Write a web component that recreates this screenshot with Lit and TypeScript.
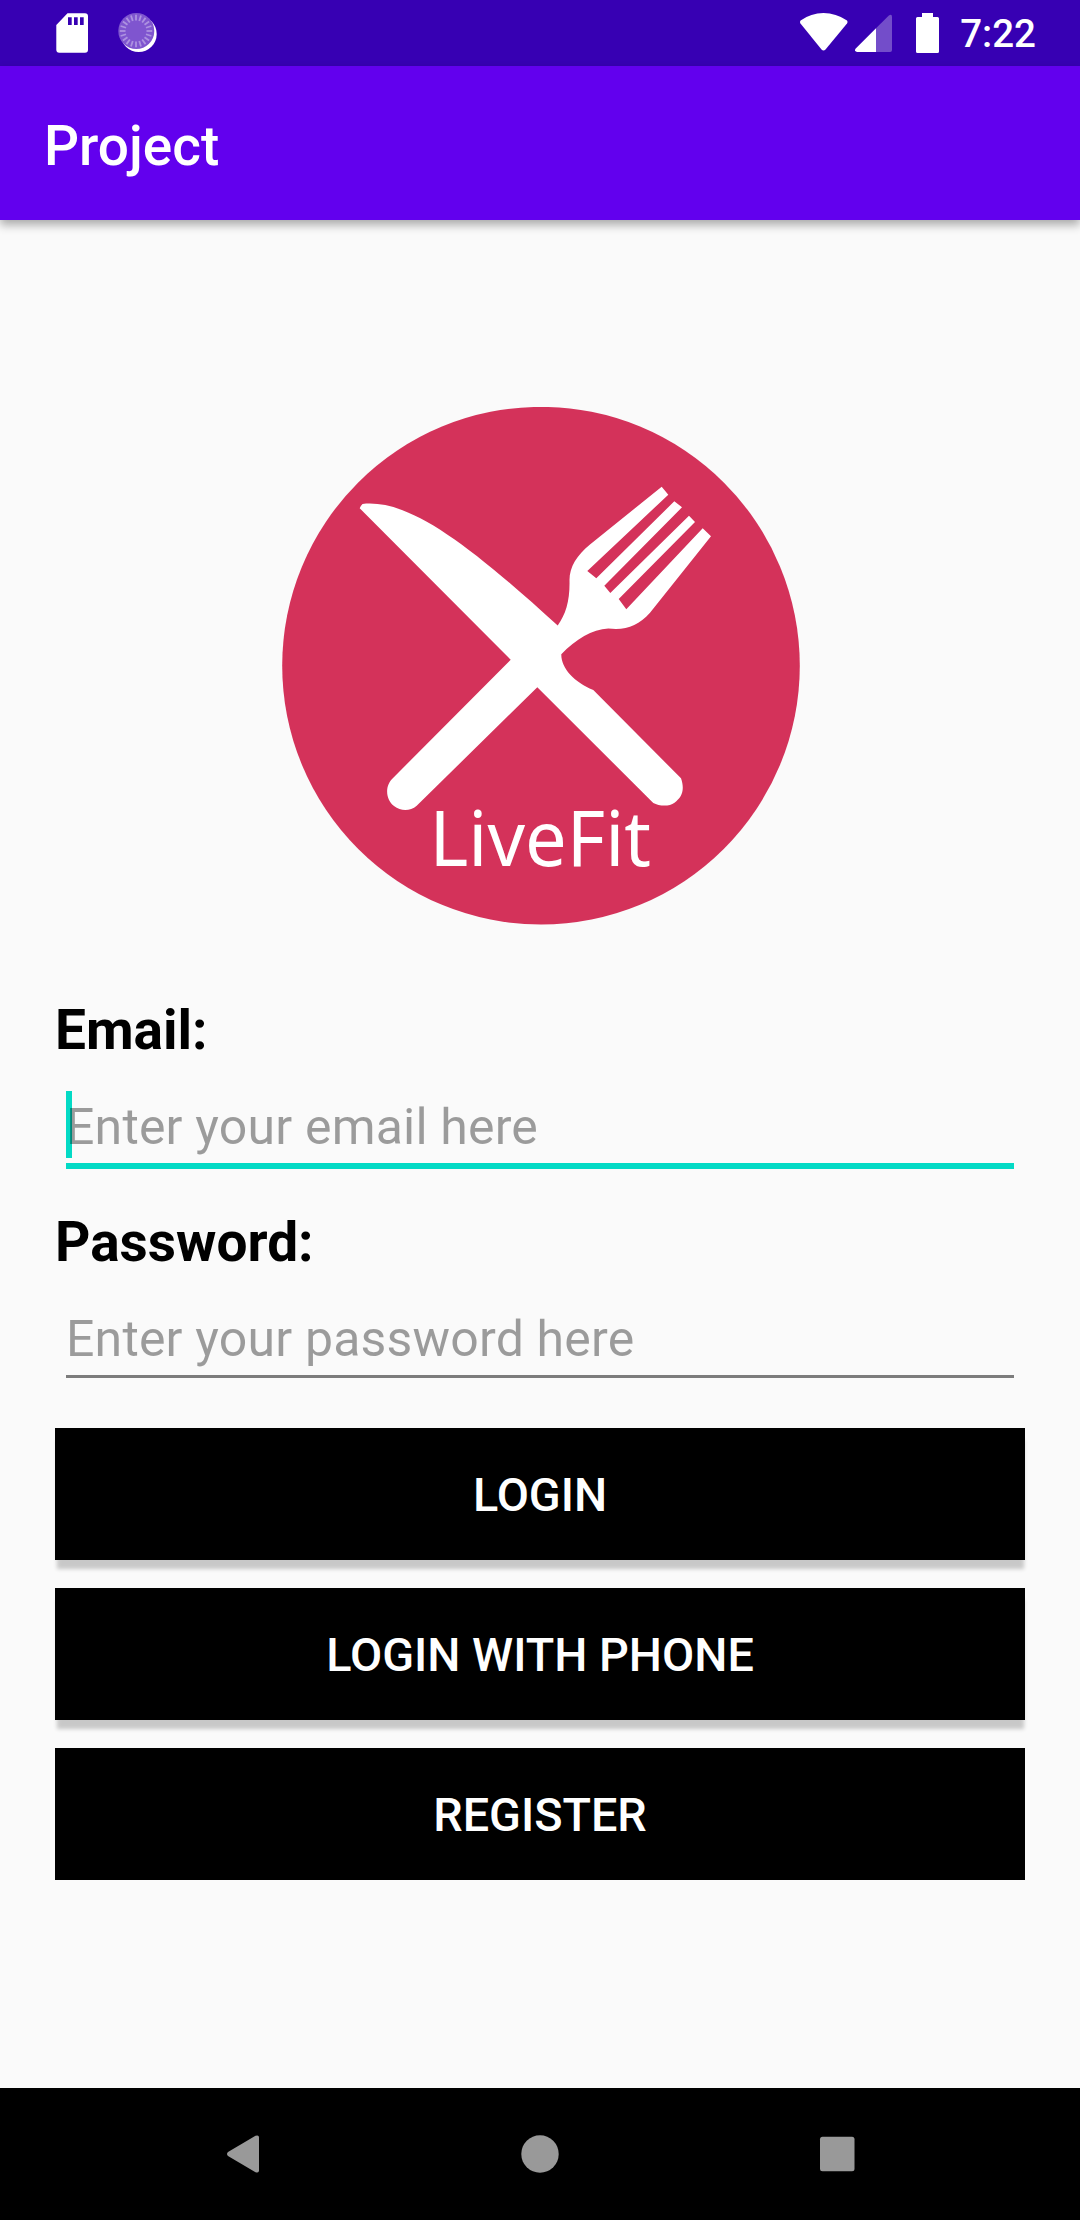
import { LitElement, html, css, svg } from "lit";
import { customElement, property } from "lit/decorators.js";

const TICKS = Array.from({ length: 20 }, (_, i) => i * 18);

@customElement("status-bar")
class StatusBar extends LitElement {
  static styles = css`
    :host {
      display: flex;
      align-items: center;
      justify-content: space-between;
      height: 66px;
      background: #3700b3;
      color: #fff;
    }
    svg { display: block; }
    .side { display: flex; align-items: center; }
    .left { padding-left: 56px; gap: 29px; }
    .right { padding-right: 44px; }
    .signal { margin-left: 7px; }
    .battery { margin-left: 24px; }
    .clock {
      margin-left: 20px;
      padding-top: 2px;
      font: 500 38.500px/64px Roboto, sans-serif;
    }
  `;
  render() {
    return html`
      <div class="side left">
        <svg width="33" height="40" viewBox="56 13 33 40">
          <path fill="#fff" fill-rule="evenodd" d="M67.5 13.3H85a3 3 0 0 1 3 3V49.700a3 3 0 0 1-3 3H59.300a3 3 0 0 1-3-3V25ZM68 17.300V25h3.700V17.300ZM74 17.300V25h3.700V17.300ZM80 17.300V25h3.700V17.300Z" />
        </svg>
        <svg width="40" height="40" viewBox="118 13 40 40">
          <circle cx="138.700" cy="34" r="18" fill="#fff" />
          <circle cx="136.300" cy="31" r="18" fill="#7f55cf" />
          ${TICKS.map(
            (a) => svg`<path d="M136 14.800v5.700" stroke="#ad92e0" stroke-width="1.800" transform="rotate(${a} 136 31)" />`
          )}
        </svg>
      </div>
      <div class="side right">
        <svg width="48" height="40" viewBox="800 13 48 40">
          <path fill="#fff" d="M800.600 20.500Q811 13 823.500 13T847 20.500Q848 22 847 23.500L825.500 49.500Q823.500 51.500 821.500 49.500L800.500 23.500Q799.500 22 800.600 20.500Z" />
        </svg>
        <svg class="signal" width="37" height="40" viewBox="855 13 37 40">
          <path fill="#fff" fill-opacity=".3" d="M876 28.300L888.600 15.700Q892 13.500 892 17V50q0 2-2 2H876Z" />
          <path fill="#fff" d="M876 28.300V52H857q-3-.5-1.500-3.300Z" />
        </svg>
        <svg class="battery" width="24" height="40" viewBox="916 13 24 40">
          <path fill="#fff" d="M922 13h11v4h4.500q1.500 0 1.500 1.500V51.500q0 1.500-1.500 1.500H917.500q-1.500 0-1.500-1.500V18.500q0-1.500 1.500-1.500H922Z" />
        </svg>
        <span class="clock">7:22</span>
      </div>
    `;
  }
}

@customElement("live-fit-logo")
class LiveFitLogo extends LitElement {
  static styles = css`
    :host { display: block; }
    svg { display: block; }
    .name { font-family: "Noto Sans", "Open Sans", sans-serif; font-size: 77.500px; fill: #fff; }
  `;
  render() {
    return html`
      <svg width="518" height="518" viewBox="282 407 518 518">
        <circle cx="541" cy="665.700" r="258.800" fill="#d4325a" />
        <path fill="#fff" d="M359.700 508.300Q360.500 506 362.500 504C409 499 467 543 557.700 625.500
          C566 614 570 600 569.500 580C569.500 567 577 555 590 544.500
          L661.700 486.700L668.300 494.700L587.300 571L596.300 578.300L674.300 501.300L682 507.300
          L604.300 585.700L610.300 593L689 515.700L695 522L618.700 599L626.300 609.300L702.700 528.300L711 536.300
          L650 612.700C638 626 626 630.500 608.300 628.500C592 629.500 576 639 561.300 654.300
          C561 668 574 682 593.300 690L681 778.300C685 790 682 797 674.500 802.700C669 807 659 806 653.300 803
          L537.300 687.300L416.700 805.700C410 811.500 401 811.500 394 806C386 800 384 786 393.300 777.700L510.700 659.700Z" />
        <text class="name" x="429.500" y="866" textLength="221.500" lengthAdjust="spacingAndGlyphs">LiveFit</text>
      </svg>
    `;
  }
}

@customElement("text-field")
class TextField extends LitElement {
  @property() label = "";
  @property() hint = "";
  @property() type = "text";
  @property({ type: Boolean, reflect: true }) active = false;
  static styles = css`
    :host { display: block; height: 212px; font-family: Roboto, sans-serif; }
    .label {
      display: block;
      font-size: 55px;
      font-weight: 700;
      line-height: 74px;
      color: #000;
    }
    .box {
      position: relative;
      box-sizing: border-box;
      margin: 24px 11px 0;
      height: 75px;
      border-bottom: 3px solid #7c7c7c;
    }
    :host([active]) .box { height: 78px; border-bottom: 6px solid #03dac5; }
    .caret { position: absolute; left: 0; top: 0; width: 6px; height: 67px; background: #03dac5; }
    .input {
      position: relative;
      display: block;
      box-sizing: border-box;
      width: 100%;
      height: 72px;
      padding: 0;
      border: 0;
      outline: 0;
      background: transparent;
      font: 400 50px/70px Roboto, sans-serif;
      letter-spacing: 0.18px;
      color: #000;
    }
    .input::placeholder { color: rgba(0, 0, 0, 0.38); opacity: 1; }
  `;
  render() {
    return html`
      <label class="label" for="field">${this.label}</label>
      <div class="box">
        ${this.active ? html`<span class="caret"></span>` : null}
        <input id="field" class="input" type=${this.type} placeholder=${this.hint} />
      </div>
    `;
  }
}

@customElement("app-root")
class AppRoot extends LitElement {
  static styles = css`
    :host {
      display: flex;
      flex-direction: column;
      height: 2220px;
      background: #fafafa;
      font-family: Roboto, sans-serif;
    }
    .toolbar {
      height: 154px;
      padding-left: 44px;
      background: #6200ee;
      color: #fff;
      font-size: 55px;
      font-weight: 500;
      line-height: 160px;
      box-sizing: border-box;
      box-shadow: 0 5px 9px rgba(0, 0, 0, 0.32);
    }
    .content { flex: 1; padding: 187px 55px 0; }
    .logo { margin: 0 0 68px 227px; }
    .actions { display: flex; flex-direction: column; gap: 28px; padding-top: 11px; }
    .button {
      height: 132px;
      padding: 2px 0 0;
      border: 0;
      background: #000;
      color: #fff;
      font: 500 46.750px/128px Roboto, sans-serif;
      text-transform: uppercase;
      box-shadow: 0 10px 4px -1.500px rgba(0, 0, 0, 0.2);
    }
    .button:last-child { box-shadow: none; }
    .nav {
      display: flex;
      align-items: center;
      height: 132px;
      padding: 0 94px;
      background: #000;
    }
    .key { flex: 1; display: flex; justify-content: center; }
  `;
  render() {
    return html`
      <status-bar></status-bar>
      <header class="toolbar">Project</header>
      <main class="content">
        <live-fit-logo class="logo"></live-fit-logo>
        <text-field label="Email:" hint="Enter your email here" active></text-field>
        <text-field label="Password:" hint="Enter your password here" type="password"></text-field>
        <div class="actions">
          <button class="button">Login</button>
          <button class="button">Login with phone</button>
          <button class="button">Register</button>
        </div>
      </main>
      <nav class="nav">
        <span class="key"><svg width="38" height="38" viewBox="0 0 38 38"><path fill="#999" d="M31.500.8Q35 -.5 35 2.500V35.500Q35 38.500 31.500 37.200L4 21Q2 19 4 17Z" /></svg></span>
        <span class="key"><svg width="38" height="38" viewBox="0 0 38 38"><circle cx="19" cy="19" r="18.700" fill="#999" /></svg></span>
        <span class="key"><svg width="38" height="38" viewBox="0 0 38 38"><rect x="2" y="1.700" width="34.500" height="34.600" rx="2.500" fill="#999" /></svg></span>
      </nav>
    `;
  }
}
